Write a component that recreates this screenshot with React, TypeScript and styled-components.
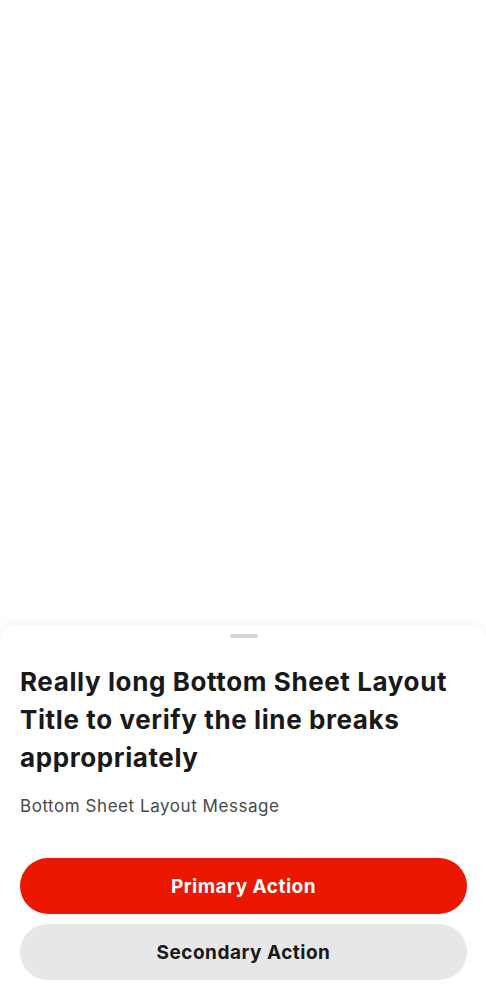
import React from "react";
import styled, { createGlobalStyle } from "styled-components";

const Global = createGlobalStyle`
  html, body { margin: 0; padding: 0; background: #ffffff; }
  body { font-family: "Inter", "Lato", sans-serif; -webkit-font-smoothing: antialiased; }
  #root { min-height: 1000px; }
`;

const Screen = styled.div`
  height: 1000px;
  display: flex;
  flex-direction: column;
  justify-content: flex-end;
  background: #ffffff;
  overflow: hidden;
`;

const Sheet = styled.div`
  background: #ffffff;
  border-radius: 16px 16px 0 0;
  box-shadow: 0 -2px 10px rgba(0, 0, 0, 0.06);
  padding: 9px 19px 20px 20px;
  display: flex;
  flex-direction: column;
`;

const Handle = styled.div`
  align-self: center;
  width: 28px;
  height: 4px;
  border-radius: 2px;
  background: #d6d6d6;
`;

const Title = styled.h1`
  margin: 25px 0 0 0;
  font-size: 26px;
  line-height: 38px;
  font-weight: 700;
  color: #191919;
  letter-spacing: 0.6px;
`;

const Message = styled.p`
  margin: 18px 0 0 0;
  font-size: 17px;
  line-height: 22px;
  color: #494949;
  letter-spacing: 0.55px;
`;

const Actions = styled.div`
  margin-top: 41px;
  display: flex;
  flex-direction: column;
  gap: 10px;
`;

const Button = styled.button<{ $variant: "primary" | "secondary" }>`
  height: 56px;
  border: none;
  border-radius: 28px;
  font-family: inherit;
  font-size: 19px;
  font-weight: 700;
  letter-spacing: 0.5px;
  background: ${(p) => (p.$variant === "primary" ? "#eb1700" : "#e7e7e7")};
  color: ${(p) => (p.$variant === "primary" ? "#ffffff" : "#191919")};
`;

export default function App() {
  return (
    <>
      <Global />
      <Screen>
        <Sheet>
          <Handle />
          <Title>Really long Bottom Sheet Layout Title to verify the line breaks appropriately</Title>
          <Message>Bottom Sheet Layout Message</Message>
          <Actions>
            <Button $variant="primary">Primary Action</Button>
            <Button $variant="secondary">Secondary Action</Button>
          </Actions>
        </Sheet>
      </Screen>
    </>
  );
}
